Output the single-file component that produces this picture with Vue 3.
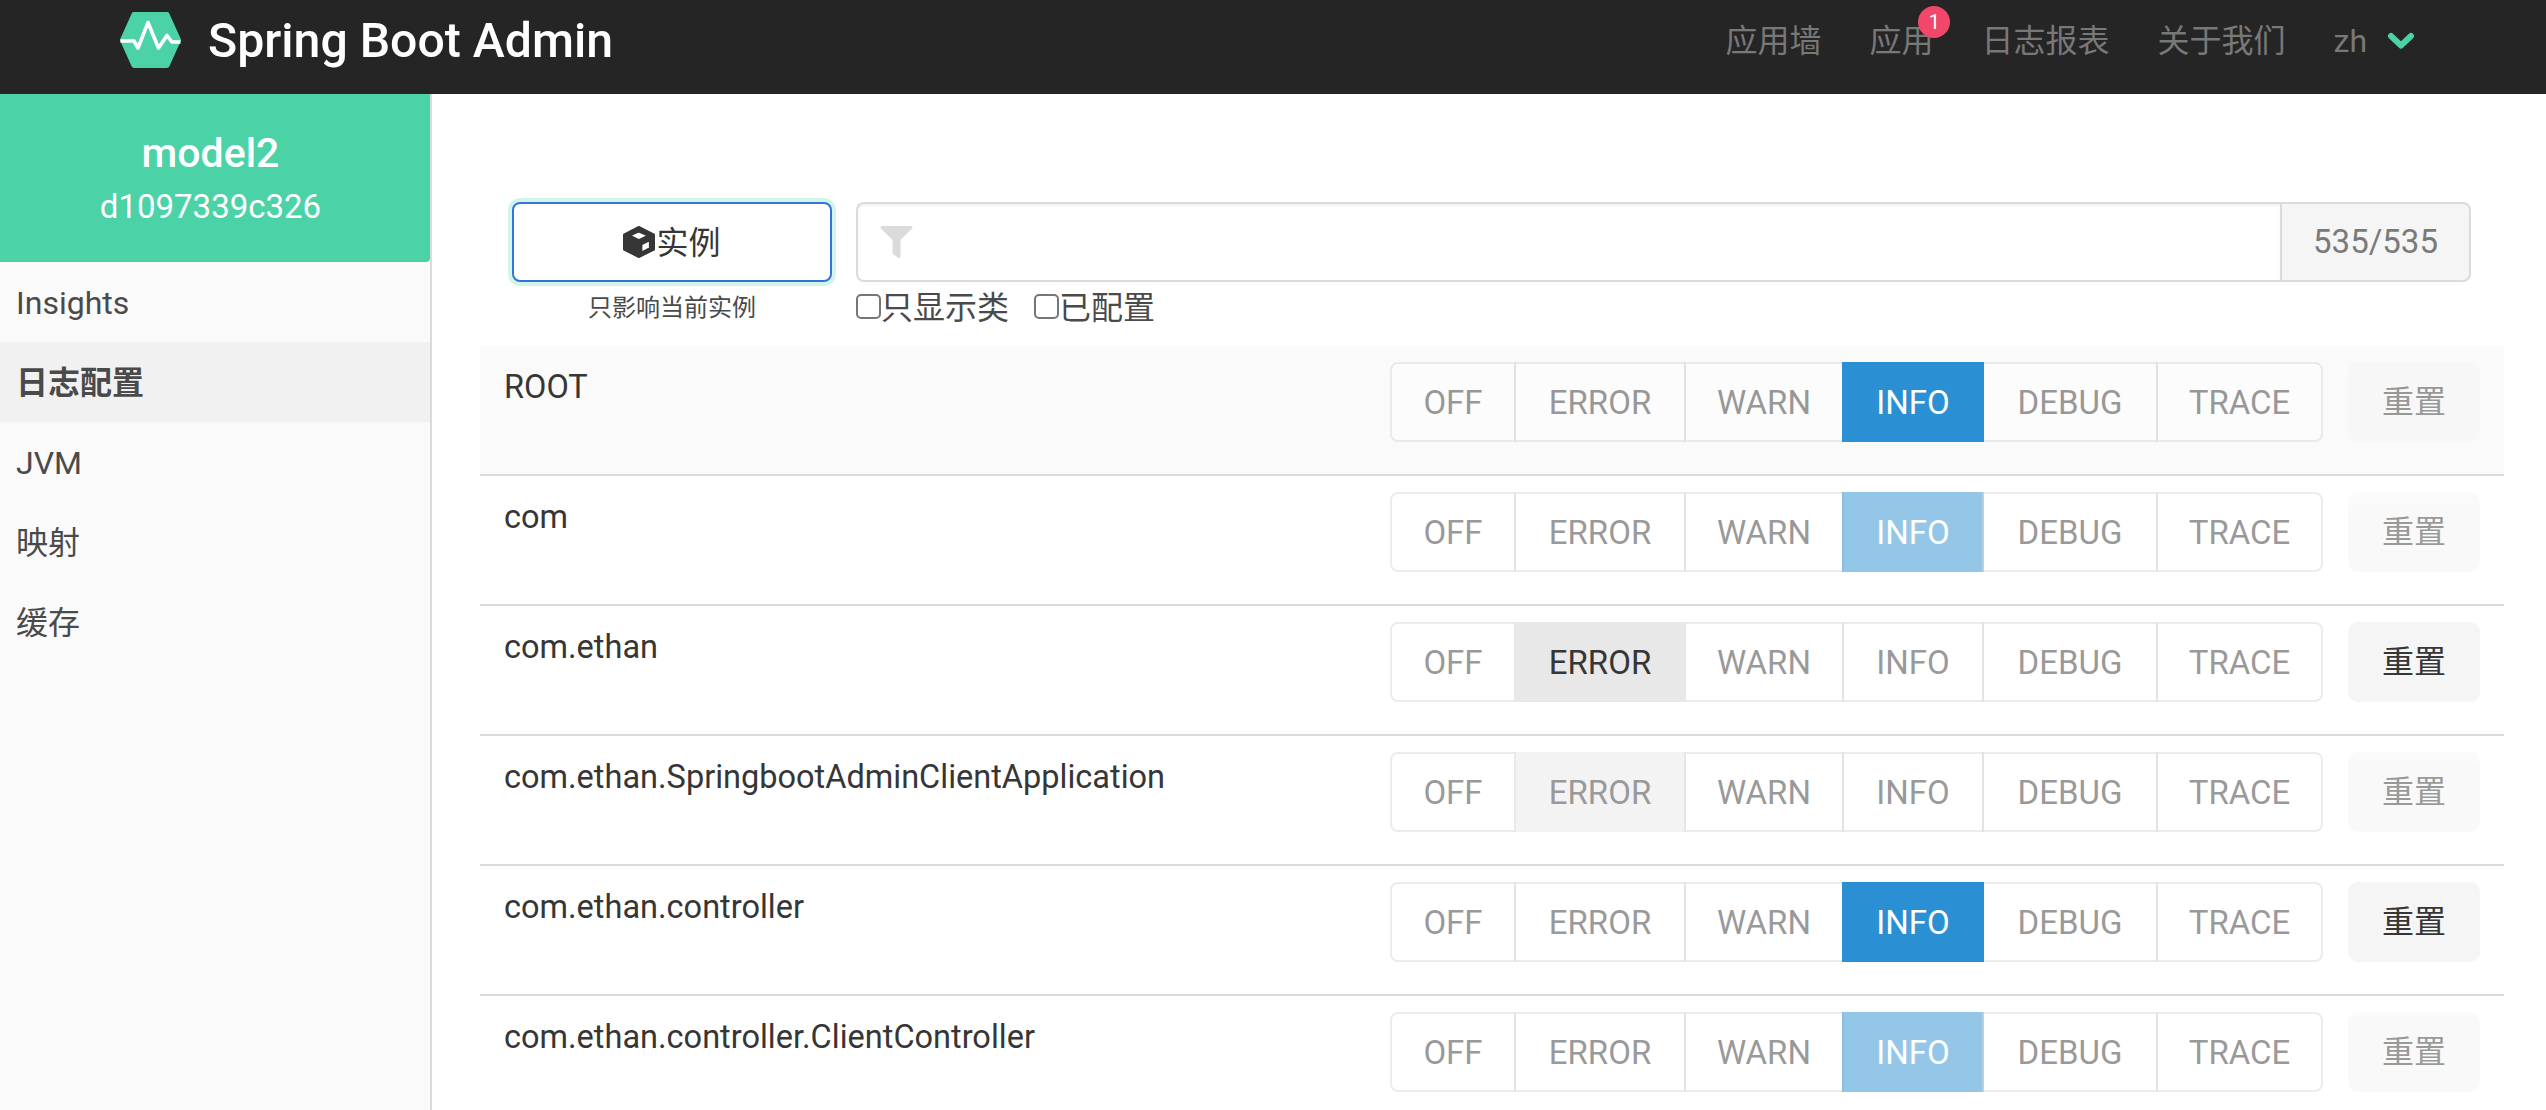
<script setup>
const menu = [
  { label: 'Insights' },
  { label: '日志配置', active: true },
  { label: 'JVM' },
  { label: '映射' },
  { label: '缓存' },
]

const navLinks = [
  { label: '应用墙' },
  { label: '应用', badge: 1 },
  { label: '日志报表' },
  { label: '关于我们' },
]

const levels = ['OFF', 'ERROR', 'WARN', 'INFO', 'DEBUG', 'TRACE']

const loggers = [
  { name: 'ROOT', level: 'INFO', configured: true, resettable: false },
  { name: 'com', level: 'INFO', configured: false, resettable: false },
  { name: 'com.ethan', level: 'ERROR', configured: true, resettable: true },
  { name: 'com.ethan.SpringbootAdminClientApplication', level: 'ERROR', configured: false, resettable: false },
  { name: 'com.ethan.controller', level: 'INFO', configured: true, resettable: true },
  { name: 'com.ethan.controller.ClientController', level: 'INFO', configured: false, resettable: false },
]

function levelClass(logger, level) {
  if (logger.level !== level) return ''
  const color = level === 'INFO' ? 'is-info' : 'is-error'
  return logger.configured ? color + ' is-set' : color
}
</script>

<template>
  <div class="page">
    <header class="navbar">
      <div class="brand">
        <svg class="logo" viewBox="0 0 61 56" width="61" height="56">
          <path
            d="M14 2.5H47L58.5 28L47 53.5H14L2.5 28Z"
            fill="#4bd2a7"
            stroke="#4bd2a7"
            stroke-width="5"
            stroke-linejoin="round"
          />
          <path
            d="M0.5 29H14L18 36L28 10.5L38.5 36L47 23.5L52 30H60.5"
            fill="none"
            stroke="#fff"
            stroke-width="3.6"
            stroke-linejoin="round"
          />
        </svg>
        <span class="brand-title">Spring Boot Admin</span>
      </div>
      <nav class="nav-links">
        <a v-for="link in navLinks" :key="link.label" class="nav-link">
          {{ link.label }}
          <span v-if="link.badge" class="badge">{{ link.badge }}</span>
        </a>
        <a class="nav-link lang">
          zh
          <svg class="chevron" viewBox="0 0 28 20" width="28" height="20">
            <path d="M4 5L14 14.5L24 5" fill="none" stroke="#4bd2a7" stroke-width="6" stroke-linecap="round" stroke-linejoin="round" />
          </svg>
        </a>
      </nav>
    </header>

    <div class="body">
      <aside class="sidebar">
        <div class="instance-head">
          <div class="app-name">model2</div>
          <div class="instance-id">d1097339c326</div>
        </div>
        <ul class="menu">
          <li v-for="item in menu" :key="item.label" class="menu-item" :class="{ active: item.active }">
            {{ item.label }}
          </li>
        </ul>
      </aside>

      <main class="content">
        <section class="toolbar">
          <div class="scope">
            <button class="scope-btn">
              <svg class="cube" viewBox="-3 -3 99 99" width="32" height="32">
                <path
                  fill="#363636"
                  stroke="#363636"
                  stroke-width="6"
                  stroke-linejoin="round"
                  fill-rule="evenodd"
                  d="M46 0L93 24V70L46 93L0 70V24ZM46 14L18 27L46 41L75 27ZM54 54V79L80 65V41Z"
                />
              </svg>
              <span class="scope-label">实例</span>
            </button>
            <p class="scope-help">只影响当前实例</p>
          </div>
          <div class="filter">
            <div class="search">
              <div class="search-input">
                <svg class="funnel" viewBox="0 0 512 512" width="33" height="32">
                  <path
                    fill="#dbdbdb"
                    d="M487.976 0H24.028C2.71 0-8.047 25.866 7.058 40.971L192 225.941V432c0 7.831 3.821 15.17 10.237 19.662l80 55.98C298.02 518.69 320 507.493 320 487.98V225.941l184.947-184.97C520.021 25.896 509.338 0 487.976 0z"
                  />
                </svg>
              </div>
              <div class="search-count">535/535</div>
            </div>
            <div class="checks">
              <label class="check"><input type="checkbox" />只显示类</label>
              <label class="check"><input type="checkbox" />已配置</label>
            </div>
          </div>
        </section>

        <div
          v-for="(logger, i) in loggers"
          :key="logger.name"
          class="logger-row"
          :class="{ striped: i === 0 }"
        >
          <div class="logger-name">{{ logger.name }}</div>
          <div class="levels">
            <button
              v-for="level in levels"
              :key="level"
              class="level-btn"
              :class="levelClass(logger, level)"
            >
              {{ level }}
            </button>
          </div>
          <button class="reset-btn" :class="{ enabled: logger.resettable }">重置</button>
        </div>
      </main>
    </div>
  </div>
</template>

<style>
html,
body {
  margin: 0;
  background: #fff;
  overflow: hidden;
}
</style>

<style scoped>
.page {
  width: 2546px;
  height: 1110px;
  overflow: hidden;
  display: flex;
  flex-direction: column;
  font-family: Roboto, "Noto Sans CJK SC", sans-serif;
  font-size: 32px;
  line-height: 48px;
  color: #363636;
}

.navbar {
  flex: none;
  height: 94px;
  box-sizing: border-box;
  padding: 0 131px 14px 120px;
  background: #252525;
  display: flex;
  align-items: center;
  justify-content: space-between;
}

.brand {
  display: flex;
  align-items: center;
  gap: 27px;
}

.brand-title {
  padding-top: 2px;
  font-size: 48.2px;
  font-weight: 500;
  color: #fff;
}

.nav-links {
  display: flex;
  align-items: center;
  padding-top: 2px;
}

.nav-link {
  position: relative;
  padding: 0 24px;
  color: #787878;
}

.lang {
  display: flex;
  align-items: center;
  gap: 20px;
  padding-right: 0;
}

.badge {
  position: absolute;
  top: -11px;
  right: 7px;
  width: 32px;
  height: 32px;
  border-radius: 50%;
  background: #f0476b;
  color: #fff;
  font-size: 20px;
  line-height: 32px;
  text-align: center;
}

.body {
  flex: 1;
  min-height: 0;
  display: flex;
}

.sidebar {
  flex: none;
  width: 432px;
  box-sizing: border-box;
  border-right: 2px solid #dbdbdb;
  background: #fafafa;
}

.instance-head {
  height: 168px;
  box-sizing: border-box;
  padding: 35px 9px 0 0;
  background: #4bd2a7;
  border-bottom-right-radius: 4px;
  color: #fff;
  text-align: center;
}

.app-name {
  font-size: 41px;
  line-height: 48px;
  font-weight: 500;
}

.instance-id {
  margin-top: 6px;
  font-size: 33px;
  line-height: 48px;
}

.menu {
  margin: 0;
  padding: 0;
  list-style: none;
}

.menu-item {
  height: 80px;
  line-height: 82px;
  padding-left: 16px;
  color: #4a4a4a;
}

.menu-item.active {
  background: #f1f1f1;
  font-weight: 700;
}

.content {
  flex: 1;
  min-width: 0;
  padding: 108px 42px 0 48px;
}

.toolbar {
  height: 144px;
  box-sizing: border-box;
  padding: 0 33px 0 32px;
  display: flex;
  gap: 24px;
}

.scope {
  flex: none;
  width: 320px;
  text-align: center;
}

.scope-btn {
  width: 100%;
  height: 80px;
  box-sizing: border-box;
  display: flex;
  align-items: center;
  justify-content: center;
  gap: 1px;
  background: #fff;
  border: 2px solid #3273dc;
  border-radius: 8px;
  box-shadow: 0 0 0 4px rgba(75, 210, 167, 0.25);
  color: #363636;
  font: inherit;
}

.scope-label {
  padding-top: 2px;
}

.scope-help {
  margin: 8px 0 0;
  font-size: 24px;
  line-height: 36px;
  color: #4a4a4a;
}

.filter {
  flex: 1;
  min-width: 0;
}

.search {
  height: 80px;
  display: flex;
}

.search-input {
  flex: 1;
  display: flex;
  align-items: center;
  padding-left: 22px;
  border: 2px solid #dbdbdb;
  border-right: 0;
  border-radius: 8px 0 0 8px;
  box-shadow: inset 0 2px 2px rgba(10, 10, 10, 0.05);
}

.search-count {
  flex: none;
  width: 191px;
  box-sizing: border-box;
  font-size: 33px;
  line-height: 76px;
  text-align: center;
  background: #f5f5f5;
  border: 2px solid #dbdbdb;
  border-radius: 0 8px 8px 0;
  color: #7a7a7a;
}

.checks {
  margin-top: 2px;
  display: flex;
  gap: 25px;
  color: #4a4a4a;
}

.check {
  display: flex;
  align-items: center;
}

.check input {
  appearance: none;
  flex: none;
  width: 25px;
  height: 25px;
  box-sizing: border-box;
  margin: -4px 0 0;
  border: 2px solid #767676;
  border-radius: 5px;
  background: #fff;
}

.logger-row {
  height: 130px;
  box-sizing: border-box;
  padding: 16px 24px 0;
  display: flex;
  border-bottom: 2px solid #dbdbdb;
}

.logger-row.striped {
  background: #fafafa;
}

.logger-name {
  flex: 1;
  min-width: 0;
  font-size: 32.5px;
  line-height: 50px;
}

.levels {
  flex: none;
  display: flex;
  margin-right: 25px;
}

.level-btn {
  height: 80px;
  box-sizing: border-box;
  padding: 2px 0 0;
  margin-left: -2px;
  background: #fff;
  border: 2px solid #dbdbdb;
  color: #363636;
  font: inherit;
  font-size: 33px;
  opacity: 0.5;
}

.level-btn:nth-child(1) {
  width: 126px;
  margin-left: 0;
  border-radius: 8px 0 0 8px;
}

.level-btn:nth-child(2) {
  width: 172px;
}

.level-btn:nth-child(3) {
  width: 160px;
}

.level-btn:nth-child(4) {
  width: 142px;
}

.level-btn:nth-child(5) {
  width: 176px;
}

.level-btn:nth-child(6) {
  width: 167px;
  border-radius: 0 8px 8px 0;
}

.level-btn.is-info {
  position: relative;
  background: #2b8fd3;
  border-color: #2b8fd3;
  color: #fff;
}

.level-btn.is-error {
  position: relative;
  background: #e8e8e8;
  border-color: #e8e8e8;
}

.level-btn.is-set {
  z-index: 1;
  opacity: 1;
}

.reset-btn {
  flex: none;
  width: 132px;
  height: 80px;
  padding: 0;
  border: 0;
  border-radius: 10px;
  background: #f5f5f5;
  color: #363636;
  font: inherit;
  opacity: 0.5;
}

.reset-btn.enabled {
  opacity: 1;
}
</style>
